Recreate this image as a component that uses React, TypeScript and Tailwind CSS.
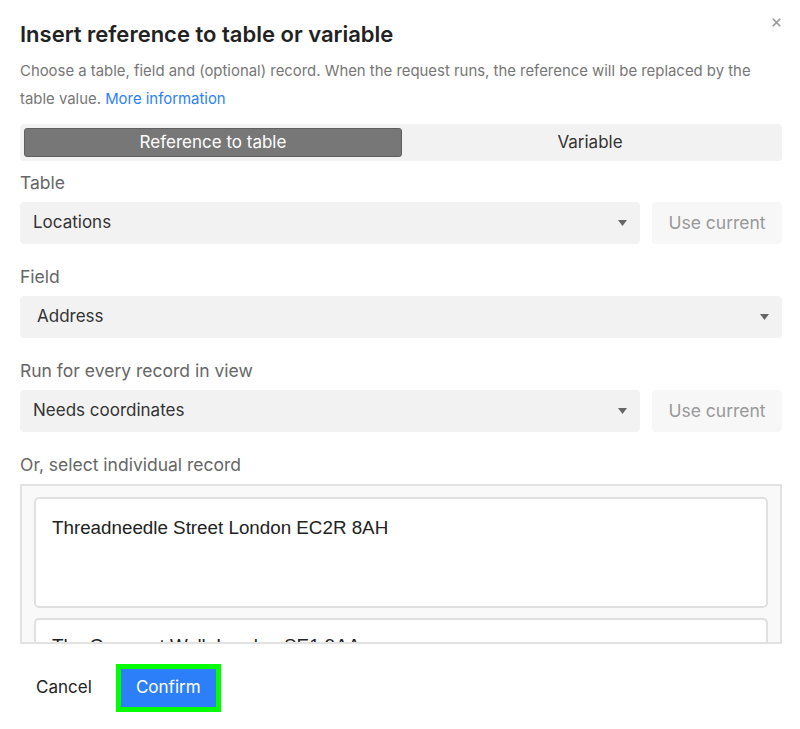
import { X } from "lucide-react";

function Caret() {
  return (
    <svg width="9" height="6" viewBox="0 0 9 6" className="shrink-0">
      <path d="M0 0 L9 0 L4.5 6 Z" fill="#666" />
    </svg>
  );
}

function Label({ children }: { children: React.ReactNode }) {
  return <div className="text-[17.5px] leading-[20px] text-[#666]">{children}</div>;
}

function SelectBox({ value, indent = "pl-[13px]" }: { value: string; indent?: string }) {
  return (
    <div
      className={`flex h-[42px] flex-1 items-center justify-between rounded-[4px] bg-[#f2f2f2] ${indent} pr-[13px]`}
    >
      <span className="text-[17px] text-[#333]">{value}</span>
      <Caret />
    </div>
  );
}

function UseCurrent() {
  return (
    <div className="flex h-[42px] w-[130px] items-center justify-center rounded-[4px] bg-[#f7f7f7] text-[17.5px] text-[#999]">
      Use current
    </div>
  );
}

export default function App() {
  return (
    <div className="relative h-[729px] w-[800px] bg-white font-['Inter',sans-serif]">
      <button className="absolute right-[17px] top-[16px] text-[#999]">
        <X size={13} strokeWidth={3.2} />
      </button>

      <div className="pl-[20px] pr-[18px] pt-[20px]">
        <h1 className="text-[22px] font-semibold leading-[28px] text-[#222]">
          Insert reference to table or variable
        </h1>
        <p className="mt-[9px] text-[14.9px] leading-[28px] text-[#777]">
          Choose a table, field and (optional) record. When the request runs, the reference will be replaced by the
          table value. <span className="text-[#2d7ff9]">More information</span>
        </p>

        <div className="mt-[11px] flex h-[37px] rounded-[4px] bg-[#f2f2f2] p-[4px]">
          <div className="flex flex-1 items-center justify-center rounded-[3px] border border-[#5f5f5f] bg-[#777] text-[17px] text-white">
            Reference to table
          </div>
          <div className="flex flex-1 items-center justify-center text-[17px] text-[#333]">Variable</div>
        </div>

        <div className="mt-[12px]">
          <Label>Table</Label>
          <div className="mt-[9px] flex gap-[12px]">
            <SelectBox value="Locations" />
            <UseCurrent />
          </div>
        </div>

        <div className="mt-[23px]">
          <Label>Field</Label>
          <div className="mt-[9px] flex">
            <SelectBox value="Address" indent="pl-[17px]" />
          </div>
        </div>

        <div className="mt-[23px]">
          <Label>Run for every record in view</Label>
          <div className="mt-[9px] flex gap-[12px]">
            <SelectBox value="Needs coordinates" />
            <UseCurrent />
          </div>
        </div>

        <div className="mt-[23px]">
          <Label>Or, select individual record</Label>
          <div className="mt-[9px] h-[160px] overflow-hidden border-2 border-[#e2e2e2] bg-[#f9f9f9] px-[12px] pt-[11px]">
            <div className="flex flex-col gap-[10px]">
              <div className="h-[111px] shrink-0 rounded-[5px] border-2 border-[#e0e0e0] bg-white px-[16px] pt-[17px] font-['Liberation_Sans',sans-serif] text-[18.8px] leading-[24px] text-[#222]">
                Threadneedle Street London EC2R 8AH
              </div>
              <div className="h-[111px] shrink-0 rounded-[5px] border-2 border-[#e0e0e0] bg-white px-[16px] pt-[14px] font-['Liberation_Sans',sans-serif] text-[18.8px] leading-[24px] text-[#222]">
                The Crescent Walk London SE1 9AA
              </div>
            </div>
          </div>
        </div>

        <div className="mt-[20px] flex items-center gap-[24px] pl-[16px]">
          <span className="text-[17px] text-[#222]">Cancel</span>
          <div className="border-[5px] border-[#00ff00]">
            <div className="flex h-[38px] w-[95px] items-center justify-center bg-[#2d7ff9] text-[17px] text-white">
              Confirm
            </div>
          </div>
        </div>
      </div>
    </div>
  );
}
